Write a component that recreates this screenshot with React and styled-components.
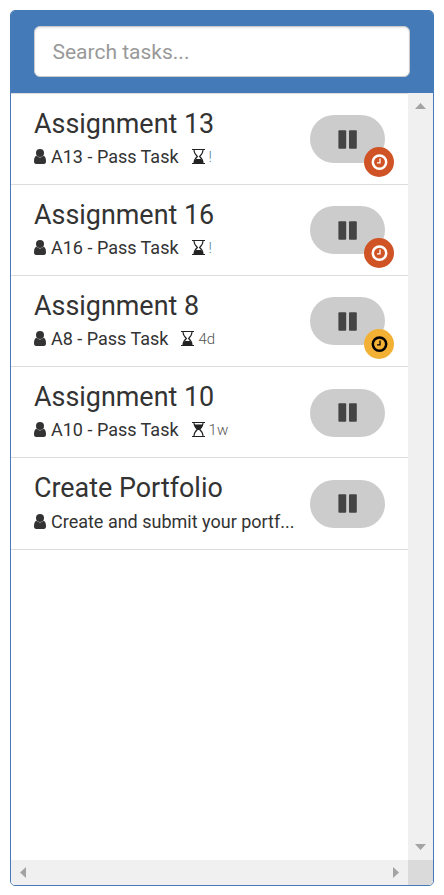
import React from 'react';
import styled, { createGlobalStyle } from 'styled-components';

const GlobalStyle = createGlobalStyle`
  * { box-sizing: border-box; }
  body { margin: 0; background: #fff; font-family: Roboto, "Liberation Sans", sans-serif; color: #333; }
`;

const Page = styled.main`
  height: 895px;
  padding: 10px 10px 9px;
`;

const Panel = styled.section`
  height: 876px;
  display: flex;
  flex-direction: column;
  border: 1px solid #457ab8;
  border-radius: 5px;
  overflow: hidden;
`;

const Header = styled.header`
  flex: none;
  height: 82px;
  padding: 15px 23px 16px;
  background: #457ab8;
`;

const SearchInput = styled.input`
  display: block;
  width: 376px;
  height: 51px;
  padding: 0 17.5px;
  border: 1px solid #ccc;
  border-radius: 6px;
  background: #fff;
  box-shadow: inset 0 1px 2px rgba(0, 0, 0, 0.1);
  font: 400 21px/28px Roboto, "Liberation Sans", sans-serif;
  color: #555;
  outline: none;
  &::placeholder { color: #999; opacity: 1; }
`;

const Viewport = styled.div`
  flex: 1;
  min-height: 0;
  display: grid;
  grid-template-columns: 1fr 25px;
  grid-template-rows: 1fr 25px;
`;

const TaskList = styled.ul`
  margin: 0;
  padding: 0;
  list-style: none;
  border-top: 1px solid #ddd;
`;

const TaskRow = styled.li`
  height: ${(p) => (p.$last ? 92 : 91)}px;
  padding: 0 23px;
  display: flex;
  justify-content: space-between;
  border-bottom: 1px solid #ddd;
`;

const TaskText = styled.div`
  padding-top: 14px;
  white-space: nowrap;
`;

const Title = styled.h4`
  margin: 0;
  font-size: 26.9px;
  line-height: 33px;
  font-weight: 400;
`;

const Details = styled.div`
  display: flex;
  align-items: center;
  height: 25px;
  margin-top: ${(p) => (p.$last ? 4 : 3)}px;
  font-size: 18px;
  line-height: 25px;
  svg { display: block; flex: none; }
`;

const Summary = styled.span`
  margin-left: 5px;
`;

const Due = styled.span`
  display: flex;
  align-items: center;
  margin-left: 13px;
  font-size: 15px;
  font-weight: 300;
`;

const DueText = styled.span`
  margin-left: 4px;
  padding-top: 1px;
  color: ${(p) => (p.$overdue ? '#4f7f98' : '#555')};
`;

const StatusPill = styled.div`
  position: relative;
  width: 75px;
  height: 48px;
  margin-top: ${(p) => (p.$low ? 22 : 21)}px;
  padding-bottom: ${(p) => (p.$low ? 2 : 0)}px;
  display: flex;
  align-items: center;
  justify-content: center;
  border-radius: 24px;
  background: #ccc;
`;

const Badge = styled.span`
  position: absolute;
  right: -9px;
  bottom: -14px;
  width: 30px;
  height: 30px;
  display: flex;
  align-items: center;
  justify-content: center;
  border-radius: 50%;
  background: ${(p) => (p.$tone === 'late' ? '#d05325' : '#f2b035')};
  color: ${(p) => (p.$tone === 'late' ? '#fff' : '#000')};
`;

const VerticalBar = styled.div`
  display: flex;
  flex-direction: column;
  justify-content: space-between;
  align-items: center;
  padding: 10px 0;
  background: #f0f0f0;
`;

const HorizontalBar = styled.div`
  display: flex;
  justify-content: space-between;
  align-items: center;
  padding: 0 9px;
  background: #f0f0f0;
`;

const Corner = styled.div`
  background: #dadada;
`;

const UserIcon = () => (
  <svg width="12" height="15" viewBox="0 0 12 15" fill="#333">
    <circle cx="6" cy="4" r="4" />
    <path d="M2.6 6.8Q6 10 9.4 6.8Q12 7.4 12 12.3Q12 15 9.8 15H2.2Q0 15 0 12.3Q0 7.4 2.6 6.8Z" />
  </svg>
);

const sand = {
  end: 'M2 14.5V12.8Q2.6 10.8 4.2 10H8.8Q10.4 10.8 11 12.8V14.5Z',
  start: 'M2.3 2.5Q3 5.8 5.5 7.2V8H7.5V7.2Q10 5.8 10.7 2.5Z',
};

const Hourglass = ({ phase }) => (
  <svg width="13" height="15" viewBox="0 0 13 15" fill="none" stroke="#222">
    <path d="M0 0.5H13M0 14.5H13" strokeWidth="1" />
    <path d="M2 1C2 4.5 3.7 6 5.4 7.5C3.7 9 2 10.5 2 14M11 1C11 4.5 9.3 6 7.6 7.5C9.3 9 11 10.5 11 14" strokeWidth="1.1" />
    <path d={sand[phase]} fill="#222" stroke="none" />
    {phase === 'start' && <path d="M3 2.5H10" stroke="#888" strokeWidth="0.8" />}
  </svg>
);

const PauseIcon = () => (
  <svg width="19" height="19" viewBox="0 0 19 19" fill="#444">
    <rect x="0.4" y="0.3" width="7.8" height="18.4" rx="0.9" />
    <rect x="11" y="0.3" width="7.8" height="18.4" rx="0.9" />
  </svg>
);

const ClockIcon = () => (
  <svg width="17" height="17" viewBox="0 0 17 17" fill="none" stroke="currentColor">
    <circle cx="8.5" cy="8.1" r="6.7" strokeWidth="2.5" />
    <path d="M9 4.4V8.8H6" strokeWidth="1.3" />
  </svg>
);

const arrows = {
  up: [11, 6, '0,6 5.5,0 11,6'],
  down: [11, 6, '0,0 11,0 5.5,6'],
  left: [6, 11, '6,0 0,5.5 6,11'],
  right: [6, 11, '0,0 6,5.5 0,11'],
};

const Arrow = ({ direction }) => {
  const [width, height, points] = arrows[direction];
  return (
    <svg width={width} height={height}>
      <polygon points={points} fill="#a3a3a3" />
    </svg>
  );
};

const tasks = [
  { title: 'Assignment 13', summary: 'A13 - Pass Task', due: '!', phase: 'end', tone: 'late' },
  { title: 'Assignment 16', summary: 'A16 - Pass Task', due: '!', phase: 'end', tone: 'late' },
  { title: 'Assignment 8', summary: 'A8 - Pass Task', due: '4d', phase: 'end', tone: 'soon' },
  { title: 'Assignment 10', summary: 'A10 - Pass Task', due: '1w', phase: 'start' },
  { title: 'Create Portfolio', summary: 'Create and submit your portf...' },
];

export default function App() {
  return (
    <Page>
      <GlobalStyle />
      <Panel>
        <Header>
          <SearchInput placeholder="Search tasks..." aria-label="Search tasks" />
        </Header>
        <Viewport>
          <TaskList>
            {tasks.map((task, i) => (
              <TaskRow key={task.title} $last={i === tasks.length - 1}>
                <TaskText>
                  <Title>{task.title}</Title>
                  <Details $last={i === tasks.length - 1}>
                    <UserIcon />
                    <Summary>{task.summary}</Summary>
                    {task.due && (
                      <Due>
                        <Hourglass phase={task.phase} />
                        <DueText $overdue={task.due === '!'}>{task.due}</DueText>
                      </Due>
                    )}
                  </Details>
                </TaskText>
                <StatusPill $low={!task.tone}>
                  <PauseIcon />
                  {task.tone && (
                    <Badge $tone={task.tone}>
                      <ClockIcon />
                    </Badge>
                  )}
                </StatusPill>
              </TaskRow>
            ))}
          </TaskList>
          <VerticalBar>
            <Arrow direction="up" />
            <Arrow direction="down" />
          </VerticalBar>
          <HorizontalBar>
            <Arrow direction="left" />
            <Arrow direction="right" />
          </HorizontalBar>
          <Corner />
        </Viewport>
      </Panel>
    </Page>
  );
}
